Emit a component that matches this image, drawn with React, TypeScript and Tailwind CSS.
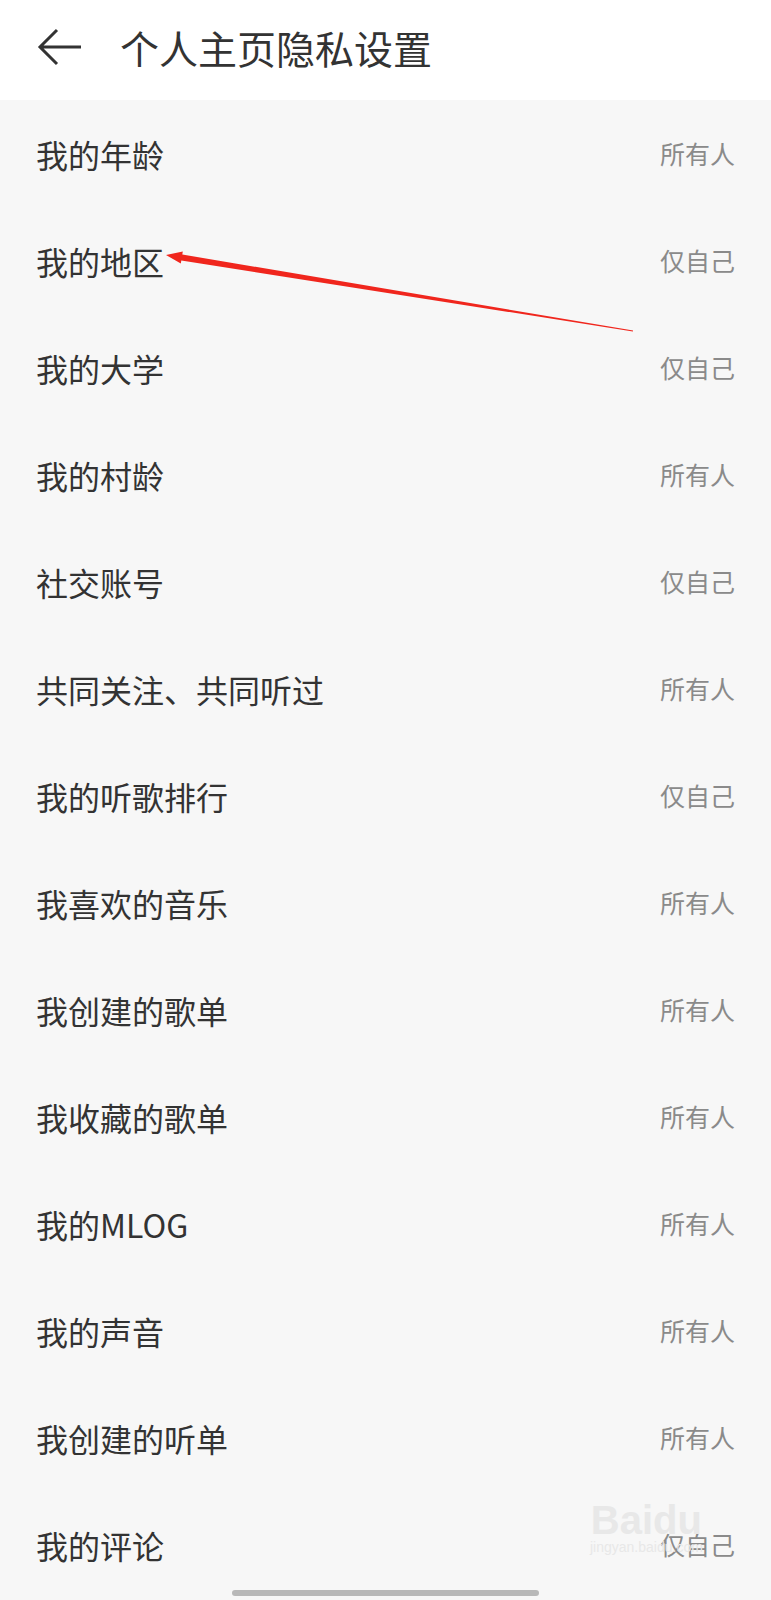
const rows: [string, string][] = [
  ["我的年龄", "所有人"],
  ["我的地区", "仅自己"],
  ["我的大学", "仅自己"],
  ["我的村龄", "所有人"],
  ["社交账号", "仅自己"],
  ["共同关注、共同听过", "所有人"],
  ["我的听歌排行", "仅自己"],
  ["我喜欢的音乐", "所有人"],
  ["我创建的歌单", "所有人"],
  ["我收藏的歌单", "所有人"],
  ["我的MLOG", "所有人"],
  ["我的声音", "所有人"],
  ["我创建的听单", "所有人"],
  ["我的评论", "仅自己"],
];

export default function App() {
  return (
    <div
      className="relative h-[1600px] w-[771px] overflow-hidden bg-[#f7f7f7]"
      style={{ fontFamily: '"Noto Sans CJK SC", "Noto Sans", sans-serif' }}
    >
      {/* header */}
      <div className="flex h-[100px] items-center bg-white pb-[6px]">
        <svg width="46" height="40" viewBox="0 0 46 40" className="ml-[37px]" fill="none">
          <path d="M44 20H3M20 3L3 20l17 17" stroke="#333" strokeWidth="3" />
        </svg>
        <h1 className="ml-[37px] text-[39px] leading-none text-[#333]">个人主页隐私设置</h1>
      </div>

      {/* list */}
      <div className="flex flex-col">
        {rows.map(([label, value]) => (
          <div key={label} className="flex h-[107px] items-center justify-between px-[36px]">
            <span className="text-[32px] text-[#333]">{label}</span>
            <span className="text-[25px] text-[#8a8a8a]">{value}</span>
          </div>
        ))}
      </div>

      {/* watermark */}
      <div className="pointer-events-none absolute left-[590px] top-[1500px] flex flex-col items-center text-[#e8e8e8]">
        <span className="text-[40px] font-bold leading-none" style={{ fontFamily: '"Liberation Sans", sans-serif' }}>Baidu</span>
        <span className="text-[14px] leading-none" style={{ fontFamily: '"Liberation Sans", sans-serif' }}>jingyan.baidu.com</span>
      </div>

      {/* red annotation arrow */}
      <svg className="pointer-events-none absolute left-0 top-0" width="771" height="1600">
        <polygon
          points="166,255 182.8,251.6 182.3,254.5 633.1,330.5 632.9,331.5 181.3,260.5 180.8,263.4"
          fill="#f0261d"
        />
      </svg>

      {/* home indicator */}
      <div className="absolute left-[232px] top-[1590px] h-[6px] w-[307px] rounded-full bg-[#b8b8b8]" />
    </div>
  );
}
